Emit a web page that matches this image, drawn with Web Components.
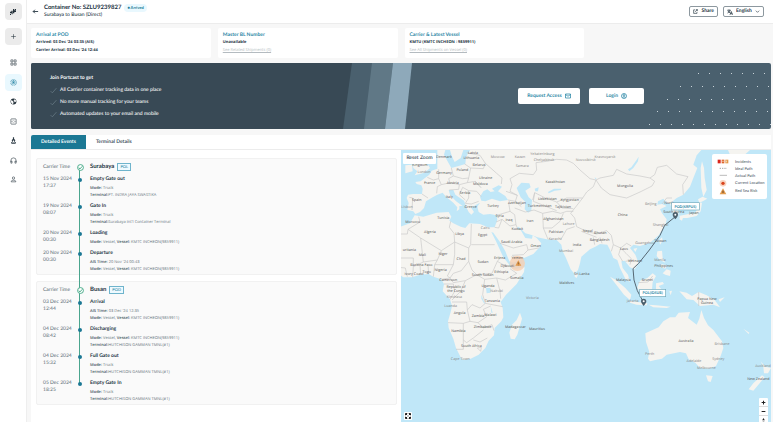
<!DOCTYPE html>
<html lang="en">
<head>
<meta charset="utf-8">
<title>Container SZLU9239827</title>
<style>
  :root { --teal:#1b7894; --ink:#22333f; --soft:#66737c; --page:#f7f7f7; --small:"Open Sans","Noto Sans",sans-serif; }
  body { margin:0; font:500 5px/7px Lato,"Open Sans",sans-serif; color:var(--ink); background:var(--page); text-rendering:geometricPrecision; }
  track-event b { font-weight:600; color:#44545f; }
</style>
</head>
<body>
<tracking-app>
  <side-nav slot="nav"></side-nav>
  <page-header slot="header"></page-header>
  <info-card slot="cards" heading="Arrival at POD"><span>Arrived: 03 Dec '24 03:35 (AIS)</span><span>Carrier Arrival: 03 Dec '24 12:44</span></info-card>
  <info-card slot="cards" heading="Master BL Number"><span>Unavailable</span><a href="#related">See Related Shipments (0)</a></info-card>
  <info-card slot="cards" heading="Carrier &amp; Latest Vessel"><span>KMTU (KMTC INCHEON : 9859911)</span><a href="#vessel">See All Shipments on Vessel (0)</a></info-card>
  <promo-banner slot="banner"></promo-banner>
  <event-tabs slot="tabs"></event-tabs>
  <event-timeline slot="events">
    <port-stop name="Surabaya" code="POL">
      <track-event date="15 Nov 2024" time="17:37" name="Empty Gate out"><div><b>Mode:</b> Truck</div><div><b>Terminal:</b>PT. INDRA JAYA SWASTIKA</div></track-event>
      <track-event date="19 Nov 2024" time="08:07" name="Gate In"><div><b>Mode:</b> Truck</div><div><b>Terminal:</b>Surabaya Int'l Container Terminal</div></track-event>
      <track-event date="20 Nov 2024" time="00:30" name="Loading"><div><b>Mode:</b> Vessel, <b>Vessel:</b> KMTC INCHEON(9859911)</div></track-event>
      <track-event date="20 Nov 2024" time="00:30" name="Departure"><div><b>AIS Time:</b> 20 Nov '24 00:43</div><div><b>Mode:</b> Vessel, <b>Vessel:</b> KMTC INCHEON(9859911)</div></track-event>
    </port-stop>
    <port-stop name="Busan" code="POD">
      <track-event date="03 Dec 2024" time="12:44" name="Arrival"><div><b>AIS Time:</b> 03 Dec '24 12:35</div><div><b>Mode:</b> Vessel, <b>Vessel:</b> KMTC INCHEON(9859911)</div></track-event>
      <track-event date="04 Dec 2024" time="08:42" name="Discharging"><div><b>Mode:</b> Vessel, <b>Vessel:</b> KMTC INCHEON(9859911)</div><div><b>Terminal:</b>HUTCHISON GAMMAN TMNL(#1)</div></track-event>
      <track-event date="04 Dec 2024" time="15:32" name="Full Gate out"><div><b>Mode:</b> Truck</div><div><b>Terminal:</b>HUTCHISON GAMMAN TMNL(#1)</div></track-event>
      <track-event date="05 Dec 2024" time="18:25" name="Empty Gate In"><div><b>Mode:</b> Truck</div><div><b>Terminal:</b>HUTCHISON GAMMAN TMNL(#1)</div></track-event>
    </port-stop>
  </event-timeline>
  <route-map slot="map"><map-legend slot="legend"></map-legend></route-map>
</tracking-app>

<script>
const BASE = `:host,*{box-sizing:border-box} button,select{font:inherit;color:inherit;text-rendering:inherit;margin:0;padding:0;border:0;background:none;min-width:0;cursor:pointer} svg{display:block;flex:none} a{color:inherit} ul{list-style:none;margin:0;padding:0} h1,h2,p{margin:0;font:inherit}`;
function define(name, render) {
  customElements.define(name, class extends HTMLElement {
    constructor() { super(); this.attachShadow({ mode: 'open' }); }
    connectedCallback() { this.shadowRoot.innerHTML = `<style>${BASE}</style>` + render(this); }
  });
}

define('tracking-app', () => `<style>
  :host{display:grid;grid-template-columns:26px minmax(0,1fr);height:100vh;overflow:hidden}
  .col{display:flex;flex-direction:column;min-width:0;min-height:0;border-left:1px solid #eee}
  main{flex:1;display:flex;flex-direction:column;gap:5px;padding:4px 2px 0 4px;min-height:0}
  .cards{display:grid;grid-template-columns:repeat(4,minmax(0,1fr));gap:7px}
  .panel{flex:1;display:flex;flex-direction:column;background:#fff;min-height:0;margin-top:1px;border-radius:2px 0 0 0}
  .split{flex:1;display:grid;grid-template-columns:minmax(0,1fr) minmax(0,1fr);min-height:0}
</style>
<slot name="nav"></slot>
<div class="col"><slot name="header"></slot>
<main><div class="cards"><slot name="cards"></slot></div><slot name="banner"></slot>
<section class="panel"><slot name="tabs"></slot><div class="split"><slot name="events"></slot><slot name="map"></slot></div></section></main></div>`);

const stroke = (p, c = '#2c3a44') => `<svg width="7" height="7" viewBox="0 0 24 24" fill="none" stroke="${c}" stroke-width="2">${p}</svg>`;
define('side-nav', () => `<style>
  :host{display:flex;flex-direction:column;align-items:center;background:#fff;padding:3px 0 0}
  button{width:17px;height:17px;border-radius:4px;display:grid;place-items:center}
  .tile{background:#ebebeb;margin-bottom:8px}
  nav{display:flex;flex-direction:column;justify-content:space-between;min-height:134px;margin-top:1px}
  .on{background:#e9f8fe}
</style>
<button class="tile" aria-label="Home"><svg width="8" height="8" viewBox="0 0 24 24" fill="#24313a"><path d="M12 3h4v4h5v5h-5v4h-4zM3 11h4V8h4v11H8v-3H3zM18 3h3v3h-3zM3 18h3v3H3z"/></svg></button>
<button class="tile" aria-label="Add">${stroke('<path d="M12 4v16M4 12h16"/>')}</button>
<nav>
<button aria-label="Dashboard">${stroke('<path d="M3 3h7v7H3zM14 3h7v7h-7zM3 14h7v7H3zM14 14h7v7h-7z"/>')}</button>
<button class="on" aria-label="Tracking">${stroke('<circle cx="12" cy="12" r="10" stroke-dasharray="13 3"/><circle cx="12" cy="12" r="5"/><circle cx="12" cy="12" r="2" fill="#2a86a5"/><path d="M12 2v6"/>', '#2a86a5')}</button>
<button aria-label="World"><svg width="7" height="7" viewBox="0 0 24 24"><circle cx="12" cy="12" r="10" fill="#26333c"/><path d="M4 8c3 0 4 2 6 3s1 3 2 4-1 4-2 6c-5-1-8-6-6-13zM13 4c2 0 3 1 5 1 2 2 3 4 3 7-2 1-3 0-4 3-2-2-2-4-4-4-2-2 1-3 2-4z" fill="#fff"/></svg></button>
<button aria-label="Developer">${stroke('<rect x="3" y="3" width="18" height="18" rx="2"/><path d="M10 9l-3 3 3 3M14 9l3 3-3 3"/>')}</button>
<button aria-label="Port"><svg width="7" height="7" viewBox="0 0 24 24" fill="#2c3a44"><path d="M10 1h4v6l4 3-1 6h-3v-4h-4v4H7l-1-6 4-3zM3 16l4 3h10l4-3-2 7H5z"/></svg></button>
<button aria-label="Support">${stroke('<path d="M3 17v-5a9 9 0 0118 0v5"/><path d="M3 14h4v7H3zM17 14h4v7h-4z"/>')}</button>
<button aria-label="Account">${stroke('<circle cx="12" cy="7" r="4"/><path d="M4 20v-2c2-5 14-5 16 0v2z"/>')}</button>
</nav>`);

define('page-header', () => `<style>
  :host{display:flex;align-items:center;gap:5px;height:24px;flex:none;background:#fff;border-bottom:1px solid #ececec;padding:0 9px 0 5px}
  h1{font-weight:700;font-size:6px;line-height:8px}
  .row{display:flex;align-items:center;gap:3px}
  .badge{font-size:4px;line-height:8px;font-weight:700;color:var(--teal);background:#e9f8fe;border-radius:4px;padding:0 3px}
  .who{margin-right:auto}
  .box{display:flex;align-items:center;gap:3px;height:11px;border:1px solid #8d989f;border-radius:2px;padding:0 3px;font-weight:700;background:#fff}
  select{appearance:none;outline:0;font-weight:700}
</style>
<button aria-label="Back"><svg width="7" height="7" viewBox="0 0 24 24" fill="none" stroke="#22333f" stroke-width="3"><path d="M21 12H4M10 6l-6 6 6 6"/></svg></button>
<div class="who"><div class="row"><h1>Container No: SZLU9239827</h1><span class="badge">● Arrived</span></div><p>Surabaya to Busan (Direct)</p></div>
<button class="box"><svg width="5" height="5" viewBox="0 0 24 24" fill="none" stroke="#22333f" stroke-width="3"><path d="M10 4H3v17h16v-7M14 3h7v7M21 3L9 14"/></svg>Share</button>
<label class="box"><svg width="6" height="6" viewBox="0 0 24 24" fill="none" stroke="#22333f" stroke-width="3"><path d="M1 5h14M8 2v3M12 5c-1 5-5 9-10 11M4 8c1 3 5 6 8 7M12 23l5-13 5 13M14 19h7"/></svg><select aria-label="Language"><option>English</option></select><svg width="5" height="5" viewBox="0 0 24 24" fill="none" stroke="#22333f" stroke-width="3"><path d="M4 8l8 8 8-8"/></svg></label>`);

define('info-card', el => `<style>
  :host{display:flex;flex-direction:column;background:#fff;border-radius:2px;padding:3px 5px;line-height:8px}
  h2{color:#2a86a5;font-weight:700}
  ::slotted(*){font:700 4px/8px var(--small)}
  ::slotted(a){color:#b4bbc0;font-weight:500}
</style><h2>${el.getAttribute('heading').replace('&', '&amp;')}</h2><slot></slot>`);

define('promo-banner', () => {
  let dots = '';
  [[667, 10], [649, 23], [636, 36], [626, 48], [618, 61]].forEach(([x, y]) => {
    for (; x < 740; x += 11) dots += `<rect x="${x}" y="${y}" width="1" height="1"/>`;
  });
  const tick = '<svg width="7" height="7" viewBox="0 0 24 24" fill="none" stroke="#758893" stroke-width="2"><path d="M2 14l6 6L22 4"/></svg>';
  return `<style>
  :host{display:flex;align-items:center;position:relative;height:66px;flex:none;border-radius:2px;overflow:hidden;color:#fff;background:#4a606e;padding:0 127px 0 19px}
  .bg{position:absolute;inset:0;width:100%;height:100%}
  .txt{position:relative;margin-right:auto;display:flex;flex-direction:column;gap:4px;line-height:8px}
  h2{font-weight:700} li{display:flex;align-items:center;gap:3px} ul{display:flex;flex-direction:column;gap:4px}
  .btns{position:relative;display:flex;gap:9px}
  button{width:62px;height:16px;border-radius:2px;background:#fff;color:#2a86a5;font-weight:700;display:flex;align-items:center;justify-content:center;gap:3px}
  .login{width:55px}
  </style>
  <svg class="bg" viewBox="0 0 740 66" preserveAspectRatio="none"><path fill="#384955" d="M0 0h321l-9 66H0z"/><path fill="#607886" d="M341 0h21l-8 66h-21z"/><path fill="#8ea9ba" d="M362 0h19l-7 66h-20z"/><g fill="#c9d3d9">${dots}</g></svg>
  <div class="txt"><h2>Join Portcast to get</h2><ul><li>${tick}All Carrier container tracking data in one place</li><li>${tick}No more manual tracking for your teams</li><li>${tick}Automated updates to your email and mobile</li></ul></div>
  <div class="btns"><button>Request Access <svg width="6" height="6" viewBox="0 0 24 24" fill="none" stroke="#2a86a5" stroke-width="3"><path d="M2 4h20v16H2zM2 6l10 7 10-7"/></svg></button><button class="login">Login <svg width="6" height="6" viewBox="0 0 24 24" fill="none" stroke="#2a86a5" stroke-width="3"><circle cx="12" cy="12" r="10"/><circle cx="12" cy="9" r="3"/><path d="M7 19c0-6 10-6 10 0"/></svg></button></div>`;
});

define('event-tabs', () => `<style>
  :host{display:flex;height:15px;flex:none;border-bottom:1px solid #ececec}
  button{padding:0 10px;color:#44545f;font-weight:700}
  .on{background:var(--teal);color:#fff;border-radius:2px 0 0 0}
</style><button class="on">Detailed Events</button><button>Terminal Details</button>`);

define('event-timeline', () => `<style>
  :host{display:flex;flex-direction:column;gap:6px;padding:8px 4px 0 5px;position:relative;min-width:0}
  .line{position:absolute;left:48px;top:17px;height:217px;width:1px;background:#4aa58e}
</style><div class="line"></div><slot></slot>`);

define('port-stop', el => `<style>
  :host{display:flex;flex-direction:column;gap:4px;border:1px solid #f1f1f1;border-radius:2px;background:#fafafa;padding:3px 6px 1px}
  .head{display:grid;grid-template-columns:32px 10px 1fr;align-items:center;height:10px;color:var(--soft)}
  .n{display:flex;align-items:center;gap:3px;color:var(--ink);font-weight:700;font-size:6px;line-height:8px;padding-left:5px}
  .tag{border:1px solid #6fb4cc;background:#eefaff;color:#2a86a5;font-size:4px;line-height:6px;font-weight:500;padding:0 2px}
  svg{position:relative;justify-self:center}
</style><div class="head"><span>Carrier Time</span><svg width="7" height="7" viewBox="0 0 24 24" fill="#fff" stroke="#35a27d" stroke-width="3"><circle cx="12" cy="12" r="10"/><path d="M6 12l4 5 8-9"/></svg><span class="n">${el.getAttribute('name')} <span class="tag">${el.getAttribute('code')}</span></span></div><slot></slot>`);

define('track-event', el => `<style>
  :host{display:grid;grid-template-columns:32px 10px 1fr;color:var(--soft)}
  .dot{width:4px;height:4px;border-radius:2px;background:var(--teal);position:relative;justify-self:center;margin-top:2px}
  h2{font-weight:700;color:var(--ink);margin-bottom:2px}
  .e{padding-left:5px}
  ::slotted(div){font:500 4px/7px var(--small)}
</style><div><div>${el.getAttribute('date')}</div><div>${el.getAttribute('time')}</div></div><span class="dot"></span><div class="e"><h2>${el.getAttribute('name')}</h2><slot></slot></div>`);

const LABELS = [[132,29,'Denmark'],[219,19,'Latvia'],[214,34,'Lithuania'],[293,31,'Moscow',1],[360,31,'Kazan',1],[427,20,'Yekaterinburg',1],[432,38,'Chelyabinsk',1],[367,57,'Samara',1],[557,39,'Novosibirsk',1],[615,29,'Krasnoyarsk',1],[60,53,'Kingdom'],[72,74,'London',1],[187,68,'Poland'],[237,54,'Belarus'],[132,77,'Germany'],[257,93,'Ukraine'],[89,107,'France'],[158,108,'Austria'],[241,112,'Moldova'],[195,137,'Serbia'],[148,150,'Italy'],[50,160,'Spain'],[21,179,'Lisbon',1],[212,181,'Greece'],[279,177,'Turkey'],[351,167,'Azerbaijan'],[466,104,'Kazakhstan'],[675,116,'Mongolia'],[442,157,'Uzbekistan'],[509,159,'Kyrgyzstan'],[419,177,'Turkmenistan'],[489,179,'Tajikistan'],[38,226,'Morocco'],[130,214,'Tunisia'],[299,207,'Syria'],[327,220,'Iraq'],[390,223,'Iran'],[460,215,'Afghanistan'],[506,231,'Lahore',1],[668,203,'China'],[752,171,'Beijing',1],[808,167,'North'],[821,196,'South Korea'],[882,197,'Japan'],[90,254,'Algeria'],[179,261,'Libya'],[256,242,'Cairo',1],[248,265,'Egypt'],[352,246,'Kuwait'],[335,285,'Saudi Arabia'],[468,254,'Pakistan'],[465,276,'Karachi',1],[563,253,'Nepal'],[601,259,'Bhutan'],[599,279,'Bangladesh'],[531,293,'India'],[407,298,'Oman'],[498,312,'Mumbai',1],[782,234,'Shanghai',1],[735,287,'Guangzhou',1],[781,283,'Taiwan'],[672,305,'Laos'],[705,342,'Vietnam'],[780,339,'Manila',1],[791,357,'Philippines'],[28,308,'uritania'],[67,323,'Mali'],[129,322,'Niger'],[183,335,'Chad'],[249,344,'Sudan'],[299,333,'Eritrea'],[352,332,'Yemen'],[322,357,'Djibouti'],[64,353,'Burkina Faso'],[42,380,'Ivory Coast'],[80,374,'Togo'],[122,369,'Nigeria'],[248,384,'South Sudan'],[304,375,'Ethiopia'],[350,392,'Somalia'],[545,381,'Sri Lanka'],[500,408,'Maldives'],[145,398,'Cameroon'],[168,421,'Republic of'],[168,432,'the Congo'],[163,451,'Kinshasa',1],[152,477,'Luanda',1],[264,417,'Uganda'],[290,432,'Nairobi',1],[277,462,'Tanzania'],[397,452,'Victoria',1],[179,497,'Angola'],[234,508,'Zambia'],[271,503,'Malawi'],[248,540,'Zimbabwe'],[175,552,'Namibia'],[214,598,'South Africa'],[181,636,'Cape Town',1],[346,541,'Madagascar'],[411,546,'Mauritius'],[670,399,'Malaysia'],[742,399,'Brunei'],[698,461,'Jakarta',1],[921,457,'Papua New'],[921,469,'Guinea'],[858,581,'Australia'],[966,592,'Brisbane',1],[749,622,'Perth',1],[882,642,'Adelaide',1],[955,636,'Sydney',1],[919,664,'Melbourne',1],[1089,657,'Auckland',1],[1075,695,'New Zealand']];
const LAND = `M112 6V40L112 62 95 68 88 80 78 88 62 100 46 102 50 108 64 112 68 122 66 138 40 138 24 140 20 150 26 165 22 186 40 190 46 198 60 192 72 180 78 160 98 148 112 140 128 134 138 146 160 164 172 178 170 190 178 184 178 174 188 174 168 160 150 140 146 126 160 126 166 140 192 158 200 180 206 192 214 200 222 192 214 180 226 172 240 164 232 176 236 192 250 200 270 198 290 202 292 215 284 238 264 238 240 228 208 226 196 240 182 236 160 226 148 218 154 206 146 192 110 194 70 206 44 202 30 226 -4 238V378L10 388 36 388 60 380 86 378 100 386 124 394 132 408 128 430 150 454 156 474 152 492 144 520 146 540 160 572 168 600 182 628 190 636 212 632 236 620 256 600 266 578 282 562 284 540 304 520 310 508 308 480 302 462 318 440 350 408 372 372 374 358 350 362 332 360 326 348 310 328 300 306 288 280 274 252 280 254 300 282 316 310 328 340 340 344 372 330 400 318 420 296 424 286 410 270 398 262 396 272 376 270 362 246 350 240 356 236 376 256 398 262 412 268 440 274 470 276 484 290 488 310 498 330 512 364 524 378 534 366 540 346 544 326 570 304 586 296 600 288 622 290 632 310 640 330 652 336 660 360 676 392 690 402 684 380 668 360 664 340 674 338 690 358 704 364 716 346 706 320 690 300 700 290 720 294 750 284 776 262 796 232 800 214 786 196 780 184 800 174 786 168 772 170 774 160 790 152 800 164 810 166 816 184 820 202 836 198 832 180 818 160 830 150 850 140 870 116 880 90 892 60 880 50 890 22 904 6Z
M38 40L80 44 90 60 74 74 44 82 52 70 40 60ZM16 52L36 50 38 70 16 76Z M360 494L366 512 352 560 344 574 332 572 328 554 336 530 350 516Z M524 370L534 380 530 390 524 386Z M630 386L648 396 676 420 694 440 690 456 672 440 650 412Z M690 458L712 462 742 466 740 472 710 470 690 464Z M712 418L720 398 742 390 758 376 768 384 758 402 756 424 744 436 720 434Z M768 406L788 402 792 408 776 414 786 426 776 428 776 440 768 434Z M772 310L786 308 788 330 796 344 780 336 770 324Z M800 364L812 368 810 384 796 380 788 376Z M782 348L800 352 796 362 784 358Z M786 268L778 276 780 290 788 278Z M700 302L712 300 706 312Z M840 206L850 206 846 218 838 214Z M836 204L866 198 886 196 892 180 898 162 906 164 902 190 890 204 862 210 848 210Z M894 154L908 146 922 152 908 160 898 164Z M906 40L912 60 914 90 920 126 910 146 904 120 902 60Z M984 6H1050L1034 20 1010 34 990 20Z M838 430L860 434 876 444 896 432 920 442 944 456 960 478 940 470 924 472 900 474 880 456 860 454Z M746 470L768 472 790 474 812 476 800 480 760 478Z M808 430L816 428 812 442ZM956 454L974 448 960 462Z M736 556L776 538 790 520 810 508 826 508 836 494 870 492 864 510 890 530 898 512 904 486 912 510 924 532 940 546 966 580 970 600 962 624 948 654 926 662 900 660 886 644 878 640 866 634 858 616 840 612 800 620 786 632 766 636 750 640 744 632 748 612 738 582Z M918 682L938 684 932 702 924 700Z M1082 640L1096 656 1113 660 1104 676 1092 676 1090 656Z M1086 682L1094 688 1072 714 1060 728 1046 724 1060 706Z M1030 542L1048 554 1046 558Z`;
const WATER = `M136 6L132 20 146 46 154 60 176 54 196 48 198 28 210 6H190L182 30 164 42 156 26 150 6Z M244 158L240 146 250 130 262 124 272 132 284 130 276 122 296 112 306 116 294 130 316 144 324 156 300 160 276 152 256 160Z M350 120L364 104 388 106 392 118 376 128 386 148 396 156 394 188 384 194 374 184 376 162 362 148Z M684 64L694 58 708 38 716 26 714 40 700 60 688 70Z M444 132L462 122 484 122 482 126 464 128 446 136Z M404 122L416 118 414 130 406 130Z M258 420L272 420 272 434 260 436Z M244 440L250 456 256 468 252 466 244 452Z M272 474L278 494 274 494Z M584 88L590 92 586 94Z`;
const BORDERS = `M82 88L100 96 116 92 116 64M116 92L124 110 112 116 110 136M124 110L150 104 178 110 176 124 148 126M154 60L160 84 146 92 150 104M160 84L188 92 206 90 212 60 194 48M212 60L250 62 256 46 240 22 200 14M206 90L202 104 178 110M202 104L226 100 240 116M188 118L206 128 230 130 244 146M188 118L178 140 196 156M206 128L206 150 196 166 214 168 236 160M226 100L244 120M256 46L290 76 306 90 304 108M28 148L38 150 36 186M66 138L84 150M324 156L346 160 352 142 318 130M346 160L364 176M326 164L330 190 290 202M330 190L344 200 348 230 330 234 306 214 288 222M284 238L296 240 306 214M348 230L352 240M344 180L376 192 402 186 428 196 430 240 444 274M428 196L458 190 482 196 500 190 520 190M430 240L456 240 480 220 490 196M352 142L330 130 336 110 330 92 358 76 400 80 410 66 408 44 440 40 470 34 500 36 520 46 540 66 570 92 588 96 600 90 640 82 650 64 680 78 720 84 750 90 764 80 772 58 800 52 830 78 864 86 848 110 850 140M588 96L580 116 560 132 548 150 512 196 524 210 530 236 560 250 590 258 620 248 634 262 640 290 662 300 680 286 694 294M588 96L604 120 630 140 680 150 720 132 756 114 764 100 750 90M398 156L404 134 436 150 470 162 500 150 548 150M404 134L400 160 440 176 470 188M470 162L486 180 520 182M482 276L500 244 524 236M544 250L590 268M580 268L584 290M600 268L606 286M640 290L634 310M662 300L656 320 668 340M662 300L678 316 694 332 690 350M676 340L700 336M786 168L800 150 816 150M820 178L834 176M56 206L60 222 24 244 22 258-4 258M24 244L62 270 124 308 164 282 162 256 148 238 152 220M164 282L206 300 212 290 214 228M214 290H284M206 300L206 340 216 366 230 380 276 376 292 340 302 328M206 340L184 368 160 376 150 390 142 384 160 350 164 320 164 282M124 308L112 336 70 342 62 270M112 336L104 350 100 386M104 350L160 350M70 342L40 356 38 388M86 378L84 350M-4 330H40V356M62 380L60 352M-4 358L16 360 22 386M124 394L150 390 160 404 196 398 230 380M132 408H160L164 430 150 454M196 398L182 430 156 456M230 380L254 394 248 440 256 466 240 480 216 470 202 486 200 462H156M254 394L290 390 300 430 302 452M290 390L316 396 350 376 330 362M292 340L320 356M202 486L210 520 190 526 144 524M210 520L234 524 260 506 250 484 272 474M234 524L250 540 276 530 282 548M190 526V576L200 584 220 570 250 546M190 576V604L168 604M220 576L240 582 262 570M232 600L244 598 242 610ZM256 466L308 476M336 322L370 320 384 306 416 300M300 286L340 300 380 290 384 306M896 432V474M714 404L744 402 758 384`;
define('route-map', () => `<style>
  :host{display:block;position:relative;overflow:hidden;background:#c0e7f8;min-width:0}
  .map{position:absolute;inset:0;width:100%;height:100%}
  .lb{font:500 11px "Open Sans","Noto Sans",sans-serif;fill:#505050;text-anchor:middle}
  .city{fill:#858585}
  .pt{font:700 11px Lato,sans-serif;fill:#2a86a5;text-anchor:middle}
  button{display:grid;place-items:center;background:#fff}
  .reset{position:absolute;left:2px;top:3px;width:33px;height:11px;border-radius:1px}
  .full{position:absolute;left:3px;bottom:2px;width:8px;height:8px;border-radius:1px}
  .zoom{position:absolute;right:3px;bottom:-3px;width:9px;border-radius:1px;overflow:hidden}
  .zoom button{width:9px;height:9px;border-bottom:1px solid #ddd}
  ::slotted(map-legend){position:absolute;right:4px;top:4px}
</style>
<svg class="map" viewBox="3 6 1110 816" preserveAspectRatio="xMinYMin slice">
<path d="${LAND}" fill="#f5f4f0"/><path d="${WATER}" fill="#c0e7f8"/><path d="${BORDERS}" fill="none" stroke="#c9c9c9" stroke-width="2"/>
<circle cx="352" cy="346" r="23" fill="#f6cfb2" opacity=".8"/>
${LABELS.map(([x, y, t, c]) => `<text class="lb${c ? ' city' : ''}" x="${x}" y="${y}">${t}</text>`).join('')}
<path d="M355 337l9 16h-18z" fill="#e39b4d"/><path d="M355 343v5M355 350v2" stroke="#6b4424" stroke-width="2"/>
<path d="M826 206L794 232 780 262 748 306 716 346 699 362 702 396 712 428 731 464" fill="none" stroke="#566773" stroke-width="3"/>
<g fill="#fff" stroke="#6fa8bb" stroke-width="2"><rect x="815" y="164" width="83" height="22"/><rect x="719" y="424" width="78" height="22"/></g>
<text class="pt" x="856" y="179">POD(KRPUS)</text><text class="pt" x="758" y="439">POL(IDSUB)</text>
<g fill="#4b5f6c"><path d="M826 214c-5-7-8-9-8-14a8 8 0 0116 0c0 5-3 7-8 14z"/><path d="M731 474c-5-7-8-9-8-14a8 8 0 0116 0c0 5-3 7-8 14z"/></g><g fill="#fff"><circle cx="826" cy="200" r="3"/><circle cx="731" cy="460" r="3"/></g>
</svg>
<button class="reset">Reset Zoom</button>
<button class="full" aria-label="Full screen"><svg width="6" height="6" viewBox="0 0 24 24" fill="none" stroke="#222" stroke-width="4"><path d="M2 9V2h7M15 2h7v7M22 15v7h-7M9 22H2v-7M3 3l6 6M21 3l-6 6M21 21l-6-6M3 21l6-6"/></svg></button>
<div class="zoom"><button aria-label="Zoom in"><svg width="5" height="5" viewBox="0 0 24 24" stroke="#222" stroke-width="5"><path d="M12 3v18M3 12h18"/></svg></button><button aria-label="Zoom out"><svg width="5" height="5" viewBox="0 0 24 24" stroke="#222" stroke-width="5"><path d="M3 12h18"/></svg></button><button aria-label="Reset bearing"><svg width="5" height="5" viewBox="0 0 24 24"><path d="M12 0l6 11H6z" fill="#222"/><path d="M12 24l6-11H6z" fill="#bbb"/></svg></button></div>
<slot name="legend"></slot>`);

define('map-legend', () => {
  const sw = p => `<svg width="16" height="7" viewBox="0 0 48 21">${p}</svg>`;
  return `<style>:host{display:block;width:55px;background:#fff;border-radius:2px;padding:4px 3px;color:#53616b;font-size:4px;line-height:7px}
  li{display:flex;align-items:center;gap:4px;white-space:nowrap;font-weight:500}
  li:nth-child(n+4){line-height:8px}</style>
  <ul><li>${sw('<path d="M8 5h9v11H8z" fill="#d9261c"/><path d="M20 5h8v11h-8z" fill="#e0662a"/><path d="M31 5h9v11h-9z" fill="#e39b4d"/><path d="M22 10h4M34 8v5" stroke="#fff" stroke-width="2"/>')}Incidents</li>
  <li>${sw('<path d="M14 10h22" stroke="#777" stroke-width="2" stroke-dasharray="4 3"/>')}Ideal Path</li>
  <li>${sw('<path d="M14 10h22" stroke="#999" stroke-width="2"/>')}Actual Path</li>
  <li>${sw('<circle cx="24" cy="10" r="10" fill="#f8d5c0"/><circle cx="24" cy="10" r="5" fill="#d9441c"/>')}Current Location</li>
  <li>${sw('<path d="M24 1l10 18H14z" fill="#e39b4d"/><path d="M24 8v7" stroke="#6b4424" stroke-width="3"/>')}Red Sea Risk</li></ul>`;
});
</script>
</body>
</html>
